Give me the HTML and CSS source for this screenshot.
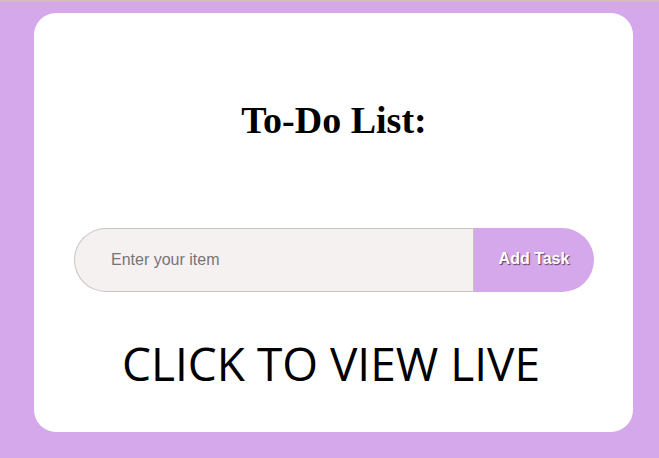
FILE: index.html
```html
<!DOCTYPE html>
<html lang="en">
<head>
<meta charset="utf-8">
<title>To-Do List</title>
<link rel="stylesheet" href="styles.css">
</head>
<body>
<div class="page">
  <main class="card">
    <h1 class="title">To-Do List:</h1>
    <div class="row">
      <input class="field" type="text" placeholder="Enter your item">
      <button class="add">Add Task</button>
    </div>
    <p class="live">CLICK TO VIEW LIVE</p>
  </main>
</div>
</body>
</html>
```
FILE: styles.css
```css
html, body {
  margin: 0;
  padding: 0;
}
body {
  background: #d5a8ec;
  border-top: 2px solid #d6bcb6;
  height: 456px;
  overflow: hidden;
}
.page {
  padding: 11px 26px 0 34px;
}
.card {
  background: #ffffff;
  border-radius: 22px;
  height: 419px;
  box-sizing: border-box;
  padding: 87px 39px 0 40px;
  display: flex;
  flex-direction: column;
  align-items: stretch;
}
.title {
  margin: 0;
  text-align: center;
  font-family: "Liberation Serif", "Times New Roman", serif;
  font-weight: bold;
  font-size: 38px;
  line-height: 40px;
  color: #000;
}
.row {
  display: flex;
  margin-top: 88px;
  height: 64px;
}
.field {
  flex: 1;
  min-width: 0;
  box-sizing: border-box;
  height: 64px;
  border: 1px solid #c8c4c4;
  border-right: none;
  border-radius: 32px 0 0 32px;
  background: #f6f1f1;
  padding: 0 0 0 36px;
  font-family: "Liberation Sans", Arial, sans-serif;
  font-size: 16px;
  color: #333;
  outline: none;
}
.field::placeholder {
  color: #757575;
}
.add {
  width: 121px;
  height: 64px;
  border: none;
  border-left: 1px solid #c8c4c4;
  border-radius: 0 32px 32px 0;
  background: #d5a8ec;
  color: #fff;
  font-family: "Liberation Sans", Arial, sans-serif;
  font-weight: bold;
  font-size: 16px;
  text-shadow: 1px 1px 1px #5a3a5a;
  padding: 0 0 3px;
  cursor: pointer;
}
.live {
  margin: 41px 0 0;
  text-align: center;
  font-family: "Open Sans", "Noto Sans", sans-serif;
  font-size: 46px;
  line-height: 60px;
  color: #000;
  position: relative;
  left: -3px;
}
```
